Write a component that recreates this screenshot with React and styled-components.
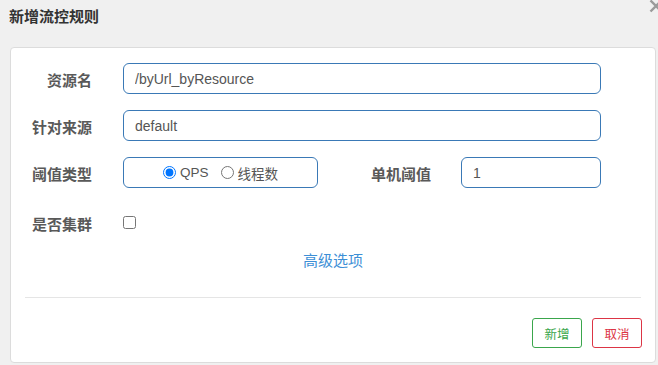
import React from "react";
import styled, { createGlobalStyle } from "styled-components";

const Global = createGlobalStyle`
  html, body { margin: 0; padding: 0; background: #f0f0f0; }
  body { font-family: "Liberation Sans", "Noto Sans CJK SC", sans-serif; }
  * { box-sizing: border-box; }
`;

const Page = styled.div`
  position: relative;
  width: 658px;
  height: 365px;
  overflow: hidden;
  background: #f0f0f0;
  display: flex;
  flex-direction: column;
`;

const Header = styled.div`
  height: 47px;
  padding: 6px 9px 0;
`;

const Title = styled.h4`
  margin: 0;
  font-family: "Noto Sans CJK SC", sans-serif;
  font-size: 15px;
  font-weight: 700;
  line-height: 20px;
  color: #333;
`;

const Close = styled.svg`
  position: absolute;
  left: 649px;
  top: -1px;
`;

const Card = styled.div`
  margin: 0 2px 0 10px;
  height: 316px;
  background: #fff;
  border: 1px solid #dcdcdc;
  border-radius: 4px;
  display: flex;
  flex-direction: column;
`;

const Body = styled.div`
  padding-top: 15px;
  display: flex;
  flex-direction: column;
  gap: 16px;
`;

const Row = styled.div`
  display: flex;
  align-items: center;
  height: ${(p) => (p.$tall ? "37px" : "31px")};
`;

const Label = styled.label`
  width: ${(p) => p.$w || 81}px;
  margin-right: ${(p) => p.$gap || 31}px;
  padding-top: 2px;
  text-align: right;
  font-family: "Noto Sans CJK SC", sans-serif;
  font-size: 15px;
  font-weight: 700;
  color: #595959;
  white-space: nowrap;
`;

const Input = styled.input`
  width: ${(p) => p.$w}px;
  height: 31px;
  padding: 0 11px;
  border: 1px solid #3a79b6;
  border-radius: 6px;
  font-family: "Liberation Sans", "Noto Sans CJK SC", sans-serif;
  font-size: 14px;
  color: #555;
  outline: none;
  background: #fff;
`;

const RadioBox = styled.div`
  width: 195px;
  height: 31px;
  border: 1px solid #3a79b6;
  border-radius: 6px;
  display: flex;
  align-items: center;
  justify-content: center;
`;

const RadioOption = styled.label`
  display: flex;
  align-items: center;
  gap: 4px;
  margin-right: ${(p) => (p.$last ? 0 : 12)}px;
  font-size: 13.5px;
  color: #555;
  font-family: "Liberation Sans", "Noto Sans CJK SC", sans-serif;
`;

const Radio = styled.input`
  margin: 0;
  width: 13px;
  height: 13px;
`;

const Check = styled.input`
  margin: 0;
  width: 13px;
  height: 13px;
`;

const Advanced = styled.a`
  align-self: center;
  margin-top: 9px;
  font-family: "Noto Sans CJK SC", sans-serif;
  font-size: 15px;
  line-height: 20px;
  color: #3d8fd6;
  text-decoration: none;
  cursor: pointer;
`;

const Divider = styled.hr`
  margin: 27px 14px 0;
  border: 0;
  border-top: 1px solid #e5e5e5;
`;

const Footer = styled.div`
  display: flex;
  justify-content: flex-end;
  gap: 10px;
  padding: 20px 13px 0;
`;

const Button = styled.button`
  width: 50px;
  height: 30px;
  padding: 0;
  background: #fff;
  border: 1px solid ${(p) => p.$color};
  color: ${(p) => p.$color};
  border-radius: 3px;
  font-family: "Noto Sans CJK SC", sans-serif;
  font-size: 12.5px;
  cursor: pointer;
`;

export default function App() {
  return (
    <Page>
      <Global />
      <Header>
        <Title>新增流控规则</Title>
      </Header>
      <Close width="14" height="14" viewBox="0 0 14 14">
        <path d="M1.5 1.5 L12.5 12.5 M12.5 1.5 L1.5 12.5" stroke="#9a9a9a" strokeWidth="2.4" />
      </Close>
      <Card>
        <Body>
          <Row>
            <Label>资源名</Label>
            <Input $w={478} defaultValue="/byUrl_byResource" />
          </Row>
          <Row>
            <Label>针对来源</Label>
            <Input $w={478} defaultValue="default" />
          </Row>
          <Row>
            <Label>阈值类型</Label>
            <RadioBox>
              <RadioOption>
                <Radio type="radio" name="grade" defaultChecked />
                QPS
              </RadioOption>
              <RadioOption $last>
                <Radio type="radio" name="grade" />
                线程数
              </RadioOption>
            </RadioBox>
            <Label $w={113} $gap={30}>单机阈值</Label>
            <Input $w={140} defaultValue="1" />
          </Row>
          <Row $tall>
            <Label>是否集群</Label>
            <Check type="checkbox" />
          </Row>
        </Body>
        <Advanced>高级选项</Advanced>
        <Divider />
        <Footer>
          <Button $color="#3aa64c">新增</Button>
          <Button $color="#dc3545">取消</Button>
        </Footer>
      </Card>
    </Page>
  );
}
